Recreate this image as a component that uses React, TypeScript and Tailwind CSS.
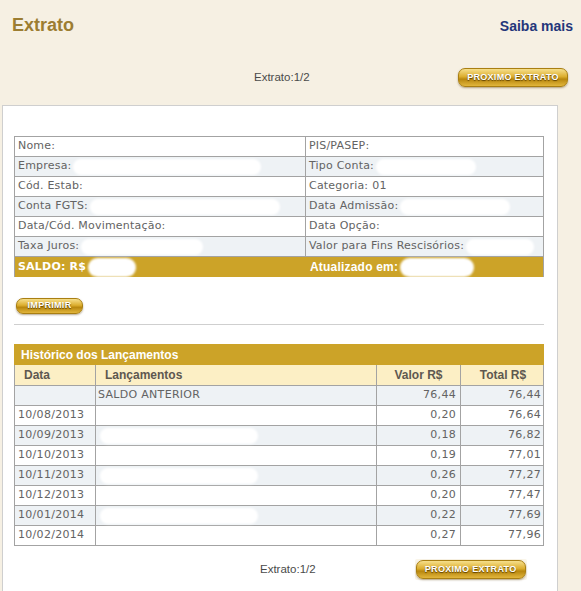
const verdana = "font-['DejaVu_Sans',Verdana,sans-serif]";
const arial = "font-['Liberation_Sans',Arial,sans-serif]";

type InfoCell = { label: string; value?: string; blob?: number };

const infoRows: [InfoCell, InfoCell][] = [
  [{ label: "Nome:" }, { label: "PIS/PASEP:" }],
  [{ label: "Empresa:", blob: 188 }, { label: "Tipo Conta:", blob: 100 }],
  [{ label: "Cód. Estab:" }, { label: "Categoria:", value: "01" }],
  [{ label: "Conta FGTS:", blob: 190 }, { label: "Data Admissão:", blob: 110 }],
  [{ label: "Data/Cód. Movimentação:" }, { label: "Data Opção:" }],
  [{ label: "Taxa Juros:", blob: 122 }, { label: "Valor para Fins Rescisórios:", blob: 68 }],
];

const lancamentos = [
  { data: "", desc: "SALDO ANTERIOR", valor: "76,44", total: "76,44" },
  { data: "10/08/2013", desc: "", valor: "0,20", total: "76,64" },
  { data: "10/09/2013", desc: "", valor: "0,18", total: "76,82" },
  { data: "10/10/2013", desc: "", valor: "0,19", total: "77,01" },
  { data: "10/11/2013", desc: "", valor: "0,26", total: "77,27" },
  { data: "10/12/2013", desc: "", valor: "0,20", total: "77,47" },
  { data: "10/01/2014", desc: "", valor: "0,22", total: "77,69" },
  { data: "10/02/2014", desc: "", valor: "0,27", total: "77,96" },
];

function Blob({ w, h = 16 }: { w: number; h?: number }) {
  return (
    <span
      className="ml-[2px] inline-block shrink-0 rounded-full bg-white blur-[1px]"
      style={{ width: w, height: h }}
    />
  );
}

function GoldButton({ label, w, h }: { label: string; w: number; h: number }) {
  return (
    <span
      className={`${arial} flex items-center justify-center rounded-[7px] border border-[#a97f12] bg-[linear-gradient(#f6df8c,#dcae2e_45%,#b8870e_60%,#e2b63c)] text-[9px] font-bold tracking-[0.3px] text-white shadow-[0_1px_2px_rgba(90,60,0,0.45)] [text-shadow:0_1px_1px_#5b3f00]`}
      style={{ width: w, height: h }}
    >
      {label}
    </span>
  );
}

export default function App() {
  return (
    <div className="h-[591px] w-[581px] overflow-hidden bg-[#f6f0e3]">
      <div className="flex items-baseline justify-between pl-[12px] pr-[8px] pt-[14px]">
        <h1 className={`${arial} text-[18px] font-bold leading-[22px] text-[#9c7d32]`}>Extrato</h1>
        <span className={`${arial} text-[14px] font-bold text-[#24367a]`}>Saiba mais</span>
      </div>

      <div className="mt-[31px] flex h-[19px] items-center">
        <span className={`${arial} pl-[254px] text-[11.5px] text-[#4a4a4a]`}>Extrato:1/2</span>
        <span className="ml-auto mr-[13px]">
          <GoldButton label="PROXIMO EXTRATO" w={110} h={19} />
        </span>
      </div>

      <div className="ml-[2px] mt-[18px] h-[500px] w-[556px] border border-[#cfcfcf] bg-white">
        {/* dados da conta */}
        <div className={`${verdana} ml-[11px] mt-[30px] w-[530px] border-x border-t border-[#a3a3a3] text-[11px] tracking-[0.2px] text-[#636363]`}>
          {infoRows.map((row, i) => (
            <div
              key={i}
              className={`grid h-[20px] grid-cols-[291px_1fr] border-b border-[#a3a3a3] ${i % 2 === 1 ? "bg-[#eef2f5]" : "bg-white"}`}
            >
              {row.map((cell, j) => (
                <div
                  key={j}
                  className={`flex items-center overflow-hidden whitespace-nowrap pl-[3px] ${j === 0 ? "border-r border-[#a3a3a3]" : ""}`}
                >
                  <span>{cell.label}</span>
                  {cell.value && <span className="ml-[4px]">{cell.value}</span>}
                  {cell.blob && <Blob w={cell.blob} />}
                </div>
              ))}
            </div>
          ))}
          <div className="grid h-[20px] grid-cols-[291px_1fr] bg-[#cca328] text-[11px] font-bold text-white">
            <div className="flex items-center pl-[3px]">
              SALDO: R$
              <Blob w={48} h={19} />
            </div>
            <div className={`${arial} flex items-center pl-[4px] text-[12px]`}>
              Atualizado em:
              <Blob w={74} h={19} />
            </div>
          </div>
        </div>

        <div className="ml-[13px] mt-[21px]">
          <GoldButton label="IMPRIMIR" w={67} h={16} />
        </div>

        <div className="ml-[11px] mt-[10px] h-px w-[530px] bg-[#cfcfcf]" />

        {/* histórico */}
        <div className="ml-[11px] mt-[19px] w-[530px]">
          <div className={`${arial} flex h-[21px] items-center bg-[#cca328] pl-[7px] text-[12px] font-bold text-white`}>
            Histórico dos Lançamentos
          </div>
          <div className={`${arial} grid h-[21px] grid-cols-[81px_281px_84px_84px] border-x border-b border-[#a3a3a3] bg-[#fcefc5] text-[12px] font-bold text-[#5e5850]`}>
            <div className="flex items-center border-r border-[#a3a3a3] pl-[9px]">Data</div>
            <div className="flex items-center border-r border-[#a3a3a3] pl-[9px]">Lançamentos</div>
            <div className="flex items-center justify-center border-r border-[#a3a3a3]">Valor R$</div>
            <div className="flex items-center justify-center">Total R$</div>
          </div>
          {lancamentos.map((l, i) => (
            <div
              key={i}
              className={`${verdana} grid h-[20px] grid-cols-[81px_281px_84px_84px] border-x border-b border-[#a3a3a3] text-[11px] tracking-[0.3px] text-[#636363] ${i % 2 === 0 ? "bg-[#eef2f5]" : "bg-white"}`}
            >
              <div className="flex items-center border-r border-[#a3a3a3] pl-[3px]">{l.data}</div>
              <div className="flex items-center border-r border-[#a3a3a3] pl-[2px]">
                {l.desc ? l.desc : i % 2 === 0 ? <Blob w={158} /> : null}
              </div>
              <div className="flex items-center justify-end border-r border-[#a3a3a3] pr-[4px]">{l.valor}</div>
              <div className="flex items-center justify-end pr-[4px]">{l.total}</div>
            </div>
          ))}
        </div>

        <div className="mt-[13px] flex h-[21px] items-center">
          <span className={`${arial} pl-[257px] text-[11.5px] text-[#4a4a4a]`}>Extrato:1/2</span>
          <span className="ml-[99px] rounded-[2px] bg-[#faf5e8] p-[1px]">
            <GoldButton label="PROXIMO EXTRATO" w={110} h={19} />
          </span>
        </div>
      </div>
    </div>
  );
}
